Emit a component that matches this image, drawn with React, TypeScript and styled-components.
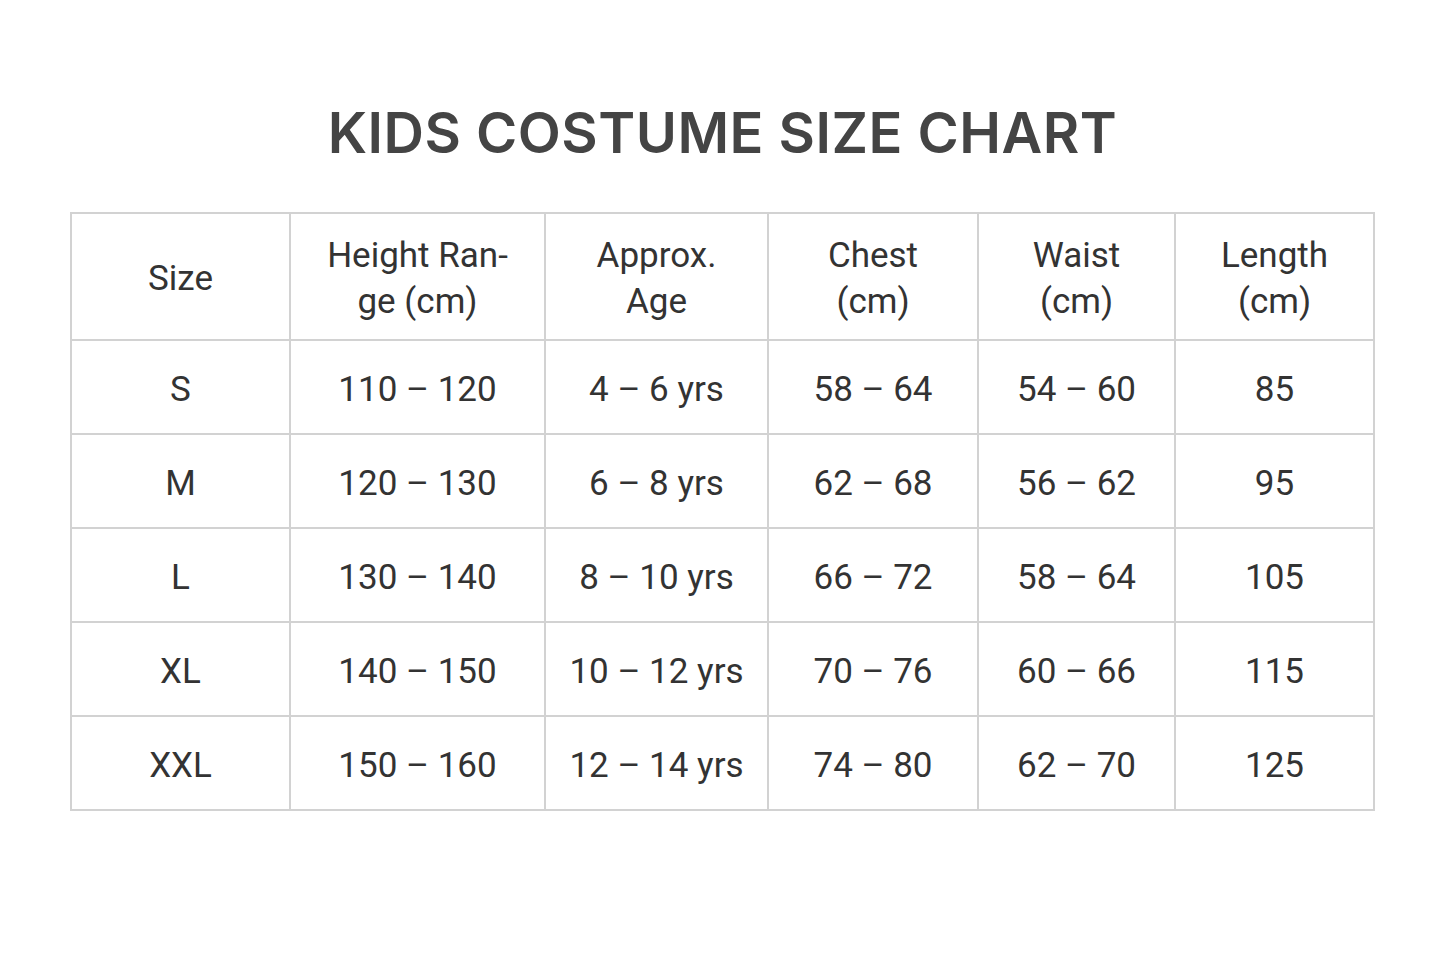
import React from 'react';
import styled, { createGlobalStyle } from 'styled-components';

const GlobalStyle = createGlobalStyle`
  html, body {
    margin: 0;
    padding: 0;
    background: #ffffff;
  }
  body {
    font-family: Roboto, "Liberation Sans", sans-serif;
    color: #333333;
  }
`;

const Page = styled.div`
  width: 1445px;
  height: 963px;
  display: flex;
  flex-direction: column;
  align-items: center;
  padding-top: 100px;
  box-sizing: border-box;
`;

const Title = styled.h1`
  margin: 0 0 46px;
  font-family: Inter, "Noto Sans", sans-serif;
  font-weight: 600;
  font-size: 56px;
  line-height: 66px;
  letter-spacing: 0.5px;
  color: #444444;
`;

const Table = styled.table`
  border-collapse: collapse;
  width: 1303px;
  table-layout: fixed;
`;

const HeadCell = styled.th`
  height: 121px;
  border: 2px solid #d2d2d2;
  font-family: Roboto, "Liberation Sans", sans-serif;
  font-weight: 400;
  font-size: 35px;
  line-height: 46px;
  color: #333333;
  text-align: center;
  vertical-align: middle;
  padding: 4px 0 0;
`;

const Cell = styled.td`
  height: 88px;
  border: 2px solid #d2d2d2;
  font-size: 35px;
  color: #333333;
  text-align: center;
  vertical-align: middle;
  padding: 4px 0 0;
`;

const columns: { label: React.ReactNode; width: number }[] = [
  { label: 'Size', width: 219 },
  {
    label: (
      <>
        Height Ran-
        <br />
        ge (cm)
      </>
    ),
    width: 255
  },
  {
    label: (
      <>
        Approx.
        <br />
        Age
      </>
    ),
    width: 223
  },
  {
    label: (
      <>
        Chest
        <br />
        (cm)
      </>
    ),
    width: 210
  },
  {
    label: (
      <>
        Waist
        <br />
        (cm)
      </>
    ),
    width: 197
  },
  {
    label: (
      <>
        Length
        <br />
        (cm)
      </>
    ),
    width: 199
  }
];

const rows = [
  ['S', '110 – 120', '4 – 6 yrs', '58 – 64', '54 – 60', '85'],
  ['M', '120 – 130', '6 – 8 yrs', '62 – 68', '56 – 62', '95'],
  ['L', '130 – 140', '8 – 10 yrs', '66 – 72', '58 – 64', '105'],
  ['XL', '140 – 150', '10 – 12 yrs', '70 – 76', '60 – 66', '115'],
  ['XXL', '150 – 160', '12 – 14 yrs', '74 – 80', '62 – 70', '125']
];

const App = () => {
  return (
    <>
      <GlobalStyle />
      <Page>
        <Title>KIDS COSTUME SIZE CHART</Title>
        <Table>
          <colgroup>
            {columns.map((col, i) => (
              <col key={i} style={{ width: col.width }} />
            ))}
          </colgroup>
          <thead>
            <tr>
              {columns.map((col, i) => (
                <HeadCell key={i}>{col.label}</HeadCell>
              ))}
            </tr>
          </thead>
          <tbody>
            {rows.map((row) => (
              <tr key={row[0]}>
                {row.map((value, i) => (
                  <Cell key={i}>{value}</Cell>
                ))}
              </tr>
            ))}
          </tbody>
        </Table>
      </Page>
    </>
  );
};

export default App;
